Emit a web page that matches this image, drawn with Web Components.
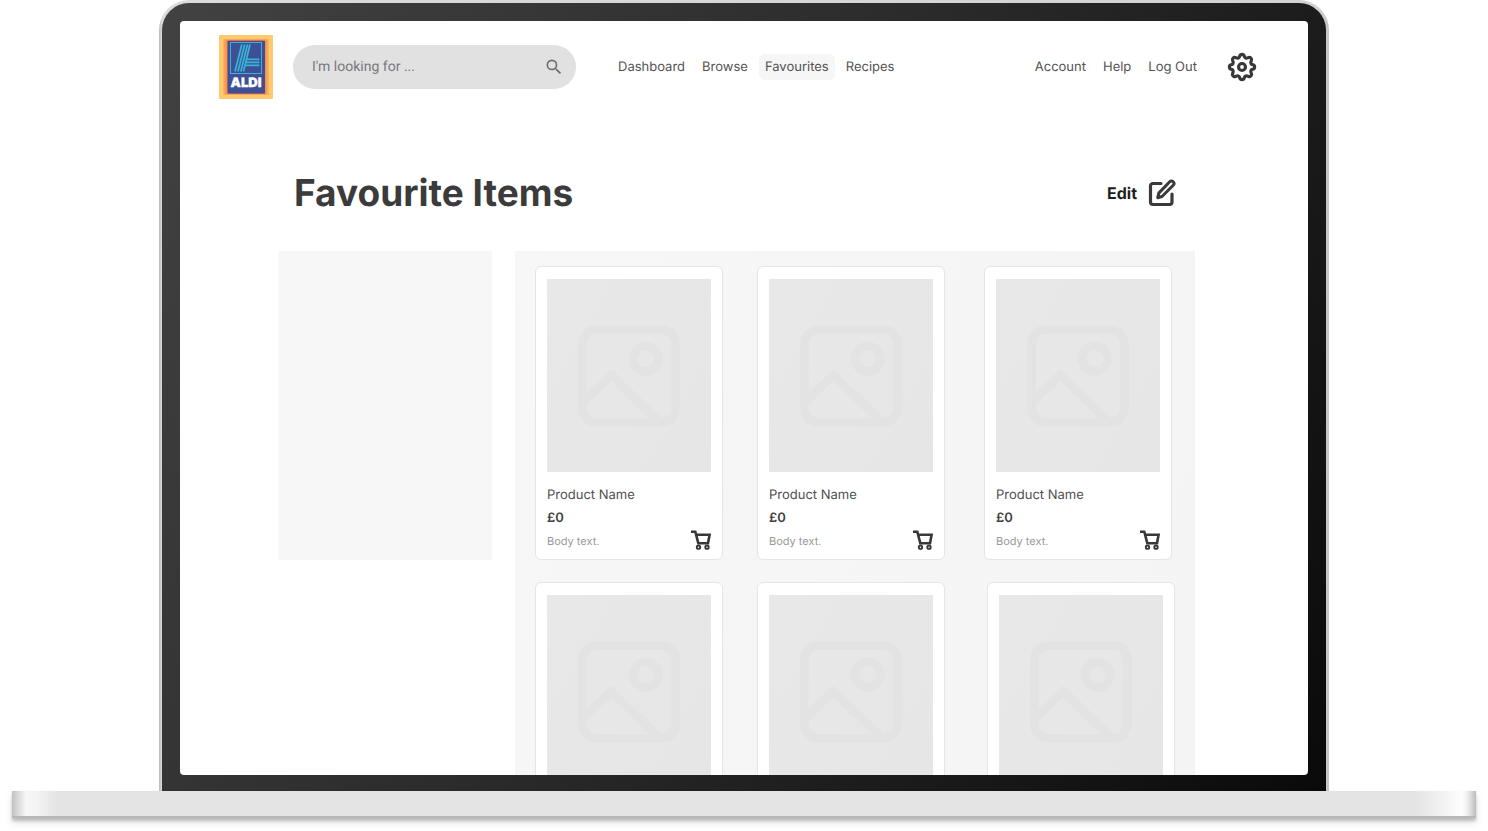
<!DOCTYPE html>
<html lang="en">
<head>
<meta charset="utf-8">
<title>Favourite Items</title>
<style>
  body { margin: 0; background: #fff; font-family: Inter, "Liberation Sans", sans-serif; color: #3b3b3b; text-rendering: geometricPrecision; }
</style>
</head>
<body>
<laptop-frame>
  <site-header></site-header>
  <favourites-page></favourites-page>
</laptop-frame>

<script>
const define = (name, html) => {
  const template = document.createElement('template');
  template.innerHTML = html;
  customElements.define(name, class extends HTMLElement {
    constructor() {
      super();
      this.attachShadow({ mode: 'open' }).append(template.content.cloneNode(true));
    }
  });
};

/* Laptop: silver rim, dark bezel, white screen and the base below it */
define('laptop-frame', `
<style>
  :host { display: flex; flex-direction: column; height: 100vh; box-sizing: border-box; padding: 0 12px 13px; overflow: hidden; }
  .lid { flex: 1; min-height: 0; box-sizing: border-box; margin: 0 147px; padding: 3px 3px 0; display: flex;
    border-radius: 30px 30px 0 0; background: linear-gradient(90deg, #b9b9b9, #dcdcdc 3px, #d2d2d2 99%, #c6c2c2); }
  .bezel { flex: 1; min-width: 0; display: flex; padding: 18px 18px 16px; border-radius: 27px 27px 0 0;
    background: linear-gradient(120deg, #424242, #2c2c2c 45%, #1a1a1a 75%, #0a0a0a); }
  .screen { flex: 1; min-width: 0; overflow: hidden; border-radius: 4px; background: #fff; }
  .base { height: 27px; box-sizing: border-box; border-bottom: 2px solid #b6b7b7;
    background: linear-gradient(90deg, #c2c2c2, #f6f6f6 14px, #f4f4f4 24px, #e4e4e4 44px, #e4e4e4 calc(100% - 60px), #fdfdfd calc(100% - 14px), #f0f0f0 calc(100% - 9px), #bdbdbd);
    box-shadow: 0 3px 3px rgba(0,0,0,.2), 0 5px 8px rgba(0,0,0,.1); }
</style>
<div class="lid"><div class="bezel"><div class="screen"><slot></slot></div></div></div>
<div class="base"></div>`);

define('aldi-logo', `
<style>:host { display: block; } svg { display: block; }</style>
<svg width="54" height="64" viewBox="0 0 54 64" role="img" aria-label="Aldi">
  <defs><linearGradient id="o"><stop stop-color="#fca052"/><stop offset=".12" stop-color="#f5683c"/><stop offset=".88" stop-color="#f5683c"/><stop offset="1" stop-color="#fca052"/></linearGradient></defs>
  <rect width="54" height="64" rx="1" fill="#fdca6e"/>
  <rect x="4.500" y="4" width="45" height="56" rx="1" fill="#fda455"/>
  <rect x="6" y="5" width="42" height="54" fill="url(#o)"/>
  <rect x="8.500" y="6" width="37.500" height="52.500" fill="#3f4f96"/>
  <g stroke="#35b5d8" fill="none">
    <rect x="11.500" y="7.500" width="31" height="31" stroke-width="1"/>
    <path d="M22.800 9.500 16 36.500M25.700 9.500 19 36.500M28.500 9.500 21.800 36.500M31 9.500 24.500 36.500" stroke-width="1.700"/>
    <path d="M28 24.300h12.500M27 27.300h13.500M26.500 30.300h14" stroke-width="1.700"/>
  </g>
  <text x="27" y="52" text-anchor="middle" font-family="Inter, sans-serif" font-weight="900" font-size="13" fill="#fff" stroke="#fff" stroke-width=".3">ALDI</text>
</svg>`);

define('search-box', `
<style>
  :host { display: block; }
  form { display: flex; align-items: center; height: 44px; box-sizing: border-box; padding: 0 12px 0 19px; border-radius: 22px; background: #e1e1e1; }
  input { flex: 1; min-width: 0; border: 0; padding: 0; outline: 0; background: none; color: #555; font: 14px/20px Roboto, sans-serif; text-rendering: inherit; }
  input::placeholder { color: #77787b; opacity: 1; }
  button { border: 0; padding: 0; background: none; display: flex; color: #6b6c6e; }
</style>
<form>
  <input type="search" aria-label="Search" placeholder="I'm looking for ...">
  <button type="button" aria-label="Search"><svg width="20" height="20" viewBox="0 0 24 24" fill="currentColor"><path d="M15.500 14h-.79l-.28-.27A6.470 6.470 0 0 0 16 9.500 6.500 6.500 0 1 0 9.500 16c1.610 0 3.090-.59 4.230-1.570l.27.28v.79l5 4.990L20.490 19l-4.990-5zm-6 0a4.500 4.500 0 1 1 0-9 4.500 4.500 0 0 1 0 9z"/></svg></button>
</form>`);

define('nav-link', `
<style>
  :host { display: block; }
  a { display: block; padding: 0 6px; border-radius: 6px; font-size: 13px; line-height: 26px; color: #545454; text-decoration: none; white-space: nowrap; }
  :host([current]) a { background: #f6f6f6; }
</style>
<a href="#"><slot></slot></a>`);

define('site-header', `
<style>
  :host { display: flex; align-items: center; padding: 14px 51px 0 39px; }
  search-box { width: 283px; margin-left: 20px; }
  nav { display: flex; gap: 5px; }
  .main { margin-left: 36px; }
  .user { margin-left: auto; }
  button { margin-left: 24px; border: 0; padding: 0; background: none; display: flex; color: #383838; }
</style>
<aldi-logo></aldi-logo>
<search-box></search-box>
<nav class="main" aria-label="Main"><nav-link>Dashboard</nav-link><nav-link>Browse</nav-link><nav-link current>Favourites</nav-link><nav-link>Recipes</nav-link></nav>
<nav class="user" aria-label="User"><nav-link>Account</nav-link><nav-link>Help</nav-link><nav-link>Log Out</nav-link></nav>
<button type="button" aria-label="Settings">
  <svg width="30" height="30" viewBox="-1.500 -1.500 19 19" fill="none" stroke="currentColor" stroke-width="2"><path d="M9.405 1.050c-.413-1.400-2.397-1.400-2.810 0l-.1.340a1.464 1.464 0 0 1-2.105.872l-.31-.17c-1.283-.698-2.686.705-1.987 1.987l.169.311c.446.820.023 1.841-.872 2.105l-.34.1c-1.400.413-1.400 2.397 0 2.810l.34.1a1.464 1.464 0 0 1 .872 2.105l-.17.310c-.698 1.283.705 2.686 1.987 1.987l.311-.169a1.464 1.464 0 0 1 2.105.872l.1.340c.413 1.400 2.397 1.400 2.810 0l.1-.34a1.464 1.464 0 0 1 2.105-.872l.31.170c1.283.698 2.686-.705 1.987-1.987l-.169-.311a1.464 1.464 0 0 1 .872-2.105l.34-.1c1.400-.413 1.400-2.397 0-2.810l-.34-.1a1.464 1.464 0 0 1-.872-2.105l.17-.31c.698-1.283-.705-2.686-1.987-1.987l-.311.169a1.464 1.464 0 0 1-2.105-.872l-.1-.34z"/><circle cx="8" cy="8" r="2.200"/></svg>
</button>`);

define('product-card', `
<style>
  :host { display: block; box-sizing: border-box; padding: 12px 11px 7px; border: 1px solid #e5e5e5; border-radius: 6px; background: #fff; }
  .picture { height: 193px; display: flex; align-items: center; justify-content: center; background: linear-gradient(120deg, #e8e8e8, #e6e6e6); }
  .details { display: grid; grid-template-columns: 1fr auto; align-items: start; margin-top: 12px; }
  h2, p { margin: 0; font-size: 13px; line-height: 23px; font-weight: 400; grid-column: 1; color: #505050; }
  .price { font-weight: 600; color: #404040; }
  .note { font-size: 11px; line-height: 22px; color: #999; }
  button { grid-column: 2; grid-row: 3; border: 0; padding: 0; background: none; display: flex; color: #383838; }
</style>
<div class="picture"><svg width="122" height="122" viewBox="0 0 24 24" fill="none" stroke="#e3e3e3" stroke-width="1.700" stroke-linejoin="round"><rect x="2.850" y="2.850" width="18.300" height="18.300" rx="2.800"/><circle cx="15.300" cy="8.600" r="2.500"/><path d="M3 17.200l5.500-5.400 9.600 9.300"/></svg></div>
<div class="details">
  <h2><slot></slot></h2>
  <p class="price"><slot name="price"></slot></p>
  <p class="note"><slot name="note"></slot></p>
  <button type="button" aria-label="Add to basket"><svg width="20" height="20" viewBox="0 0 20 20" fill="none" stroke="currentColor"><path d="M0 1.700h4.300l3 11.500h9.700l1.600-8.500H5.500" stroke-width="2.600"/><circle cx="7.500" cy="17.200" r="1.700" stroke-width="1.900"/><circle cx="16" cy="17.200" r="1.700" stroke-width="1.900"/></svg></button>
</div>`);

define('favourites-page', `
<style>
  :host { display: block; padding: 70px 113px 0 98px; }
  header { display: flex; align-items: center; justify-content: space-between; padding: 0 19px 0 16px; }
  h1 { margin: 0; font-size: 37px; line-height: 48px; font-weight: 700; }
  button { display: flex; align-items: center; gap: 11px; border: 0; padding: 0; background: none; color: #1e1e1e; font: 700 16px/24px Inter, sans-serif; text-rendering: inherit; }
  button svg { color: #3a3a3a; }
  .columns { display: flex; align-items: flex-start; gap: 23px; margin-top: 34px; }
  aside { width: 214px; height: 309px; background: #f7f7f7; }
  main { flex: 1; display: grid; gap: 22px; padding: 15px 20px 20px; background: linear-gradient(110deg, #f7f7f7, #f4f4f4); }
  .row { display: grid; grid-template-columns: 188px 193px 188px; column-gap: 34px; }
  .row + .row { grid-template-columns: 188px 196px 188px; }
  product-card { width: 188px; }
</style>
<header>
  <h1>Favourite Items</h1>
  <button type="button">Edit <svg width="28" height="28" viewBox="0 0 28 28" fill="none" stroke="currentColor" stroke-width="3.200" stroke-linecap="round" stroke-linejoin="round"><path d="M13 4.500H5A2.500 2.500 0 0 0 2.500 7v16A2.500 2.500 0 0 0 5 25.500h16.500A2.500 2.500 0 0 0 24 23v-8"/><path d="M21.700 2.800a2.400 2.400 0 0 1 3.500 3.500L14 17.500l-4.300 1.200 1.100-4.600z" stroke-width="3"/></svg></button>
</header>
<div class="columns">
  <aside aria-label="Filters"></aside>
  <main>
    <div class="row">${'<product-card>Product Name<span slot="price">£0</span><span slot="note">Body text.</span></product-card>'.repeat(3)}</div>
    <div class="row">${'<product-card></product-card>'.repeat(3)}</div>
  </main>
</div>`);
</script>
</body>
</html>
